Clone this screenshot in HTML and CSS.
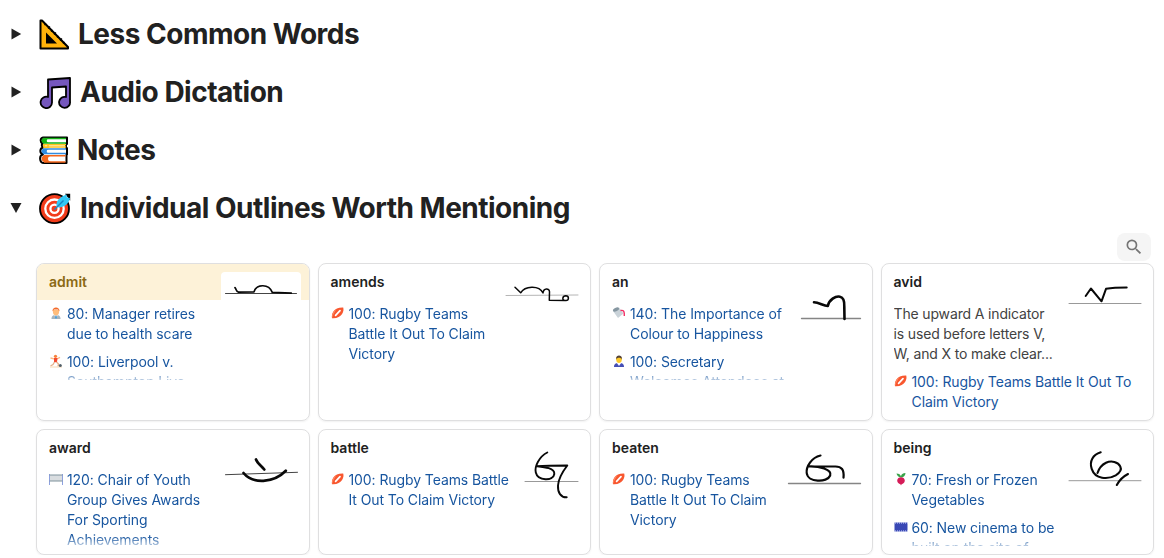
FILE: index.html
```html
<!DOCTYPE html>
<html lang="en">
<head>
<meta charset="utf-8">
<title>Outlines</title>
<link rel="stylesheet" href="styles.css">
</head>
<body>
<svg class="defs" aria-hidden="true">
  <symbol id="rugby" viewBox="0 0 14 14"><path d="M1 12.2C.2 8 2.500 1.200 12.200 1.500 13.500 5.500 10.500 13 1 12.200Z" fill="#f8572f"/><path d="M1 12.200C.5 9 2 5 5.500 3 3.500 6 2 9 1 12.200Z" fill="#ff8a65"/><path d="M4.600 9.300 9 4.700" stroke="#fff" stroke-width="1.700" stroke-linecap="round"/></symbol>
</svg>
<main class="page">
  <h2 class="toggle">
    <svg class="arrow" viewBox="0 0 12 12"><path d="M1.500.5v11L11.200 6z"/></svg>
    <svg class="emoji" viewBox="0 0 32 32"><path d="M1.500 1.500V29.500h27.500v-1.500L3 1.500z" fill="#ffb20a" stroke="#000" stroke-width="2" stroke-linejoin="round"/><path d="M7 13.500v11h11z" fill="#000"/><path d="m5.500 6 1.500-1.500M9 9.500l2-2M12 12.500l1.500-1.500M15 15.500l2-2M18 18.500l1.500-1.500M21 21.500l2-2M24 24.500l1.500-1.500" stroke="#000" stroke-width="1.100"/></svg>
    <span class="label">Less Common Words</span>
  </h2>
  <h2 class="toggle audio">
    <svg class="arrow" viewBox="0 0 12 12"><path d="M1.500.5v11L11.200 6z"/></svg>
    <svg class="emoji" viewBox="0 0 32 32"><path d="M9 2.500 31 1v23.500a5.500 5.500 0 1 1-4-4.500V9.500l-14 1V25.500a5.700 5.700 0 1 1-4-5.500z" fill="#7557bd" stroke="#000" stroke-width="1.800" stroke-linejoin="round"/></svg>
    <span class="label">Audio Dictation</span>
  </h2>
  <h2 class="toggle notes">
    <svg class="arrow" viewBox="0 0 12 12"><path d="M1.500.5v11L11.200 6z"/></svg>
    <svg class="emoji" viewBox="0 0 32 32"><path d="M4 2.500h24v6.500h-1v4h1v6.500h-.5v8.500H5C0 28 0 20 4 19.500 0 18 1 13 4 12.500 2 11 3 9 3.500 8.500 1 7 1 3 4 2.500Z" fill="#fff" stroke="#000" stroke-width="2" stroke-linejoin="round"/><path d="M4 3.500h6c-3 0-3 4.500 0 4.500H4C2 7 2 4 4 3.500Z" fill="#13b315"/><path d="M4 3.500h23M4 8h23" stroke="#13b315" stroke-width="1.300"/><path d="M4 9.800h23M5 12h22M5 9.800v2.500h4V9.800" fill="none" stroke="#ffc21c" stroke-width="1.500"/><path d="M4 14h6c-3 0-3 4.500 0 4.500H4C2 17.500 2 14.500 4 14Z" fill="#318ce0"/><path d="M4 14h23M4 18.500h23" stroke="#318ce0" stroke-width="1.400"/><path d="M4.500 20.800H12c-4 .5-4 5.700 0 6.200H5c-3-.5-3-5.500-.5-6.200Z" fill="#f5671c"/><path d="M4.500 20.800h22M5 27h21.500" stroke="#f5671c" stroke-width="1.500"/></svg>
    <span class="label">Notes</span>
  </h2>
  <h2 class="toggle target">
    <svg class="arrow" viewBox="0 0 12 12"><path d="M.5 1h11L6 11z"/></svg>
    <svg class="emoji" viewBox="0 0 32 32"><circle cx="15.500" cy="15.700" r="14.500" fill="#f23c1b" stroke="#000" stroke-width="1.800"/><circle cx="15.500" cy="15.700" r="9.200" fill="none" stroke="#fff" stroke-width="2.300"/><circle cx="15.500" cy="15.700" r="4.100" fill="#f23c1b" stroke="#fff" stroke-width="2.300"/><path d="M26 .8h5.200v7" fill="#000"/><path d="M17.500 13c-.5-6 3.500-9 10-11.500l.3 3 3.200.5c-1.500 6-5.500 9.500-11.500 9.500z" fill="#32c8f5"/><path d="m15.500 16.500 9-9" stroke="#1687c5" stroke-width="1.500"/></svg>
    <span class="label">Individual Outlines Worth Mentioning</span>
  </h2>

  <div class="toolbar">
    <button class="search" aria-label="Search"><svg viewBox="0 0 24 24"><path d="M15.500 14h-.79l-.28-.27A6.470 6.470 0 0 0 16 9.500 6.500 6.500 0 1 0 9.500 16c1.610 0 3.090-.59 4.230-1.570l.27.28v.79l5 4.990L20.490 19l-4.990-5zm-6 0C7.010 14 5 11.990 5 9.500S7.010 5 9.500 5 14 7.010 14 9.500 11.990 14 9.500 14z"/></svg></button>
  </div>

  <section class="cards">
    <article class="card highlight">
      <h3>admit</h3>
      <svg class="sketch" viewBox="218.500 264 90 76"><path class="paper" d="M220.500 340v-64a4 4 0 0 1 4-4h72a4 4 0 0 1 4 4v64z"/><path class="rule dark" d="M225 293.500h71"/><path d="M234.500 287.700c1.500 1.500 1 4 3.500 4.500l15.500-.3c2-7.500 14.500-9 18.300.5l19 .8" stroke-width="1.700"/></svg>
      <ul class="body">
        <li><svg class="icon" viewBox="0 0 14 14"><path d="M2.500 13c0-3.500 2-4 4.500-4s4.500.5 4.500 4z" fill="#a6b5bf"/><path d="M5 8.500h4L7 13z" fill="#e8eef2"/><path d="M6.400 9.500h1.200l.4 2.500-1 1-1-1z" fill="#4a9bd5"/><path d="M4 4h6v2.500c0 4-6 4-6 0z" fill="#ffbd7c"/><path d="M3.500 5.500C3 0 11 0 10.500 5.500L9 3.500H5z" fill="#f36b2a"/></svg><a>80: Manager retires<br>due to health scare</a></li>
        <li><svg class="icon" viewBox="0 0 14 14"><circle cx="6.500" cy="2.300" r="1.600" fill="#f6813b"/><path d="m1.500 4 3.500.8h3l3-1.500" fill="none" stroke="#ffb781" stroke-width="1.300"/><path d="M5 4h3.500L8 8.300H5z" fill="#f44a31"/><path d="M5.500 8 4 10.500 1.500 12M7.500 8l2 2-.5 2.500" fill="none" stroke="#e6b08b" stroke-width="1.300"/><path d="M1 13h12" stroke="#f7d9b5"/><circle cx="11.300" cy="11.500" r="1.500" fill="#526069"/></svg><a>100: Liverpool v.<br>Southampton Live</a></li>
      </ul>
    </article>
    <article class="card">
      <h3>amends</h3>
      <svg class="sketch" viewBox="500 264 90 76"><path class="rule pale" d="M506 295.500l72-.5"/><path d="m515 287.300 5.700 5.500c4-7 18.300-8 22.300.2.500-5.500 6.500-5 6.500-1.200l-.2 8.500 16.700.2c3 0 3.500-4.500-.2-4.700-3.500 0-4 4.400-1 4.700" stroke-width="1.500"/></svg>
      <ul class="body">
        <li><svg class="icon"><use href="#rugby"/></svg><a>100: Rugby Teams<br>Battle It Out To Claim<br>Victory</a></li>
      </ul>
    </article>
    <article class="card">
      <h3>an</h3>
      <svg class="sketch" viewBox="781.500 264 90 76"><path class="rule thick" d="M801 318.500h59"/><path d="M813.500 302.300c5 .2 9 3.200 13.800 3.700 1-6 8-10.500 12.200-9.300 4.500 1 4.500 6 4.300 10l.2 12.300" stroke-width="2.600"/></svg>
      <ul class="body">
        <li><svg class="icon" viewBox="0 0 14 14"><path d="m1 5 6-3.500 4.500 6L6 12z" fill="#cad3d9"/><ellipse cx="4" cy="3.500" rx="3.300" ry="1.800" fill="#8697a1" transform="rotate(-28 4 3.500)"/><path d="M8.500 4.500c3.500-.5 4 1 3.800 5.500" fill="none" stroke="#f32c62" stroke-width="1.400"/></svg><a>140: The Importance of<br>Colour to Happiness</a></li>
        <li><svg class="icon" viewBox="0 0 14 14"><path d="M2 13c0-3.500 2-4 5-4s5 .5 5 4z" fill="#454fb5"/><path d="M4.500 8.500h5L7 12z" fill="#fff"/><path d="M4 5.500V4.500c0-4 6-4 6 0v1z" fill="#554235"/><path d="M4.300 4.500c1.500 0 2-1 2.700-1s1.200 1 2.700 1v1.800c0 3.500-5.400 3.500-5.400 0z" fill="#ffca28"/></svg><a>100: Secretary<br>Welcomes Attendees at</a></li>
      </ul>
    </article>
    <article class="card">
      <h3>avid</h3>
      <svg class="sketch" viewBox="1063 264 90 76"><path class="rule" d="M1069 303.500h72"/><path d="m1085.700 296 5.200-7.500 10.600 12.800 4.500-12.500c6-1 14-1.300 20.700-1.300" stroke-width="2"/></svg>
      <div class="body full">
        <p>The upward A indicator<br>is used before letters V,<br>W, and X to make clear...</p>
        <ul>
          <li><svg class="icon"><use href="#rugby"/></svg><a>100: Rugby Teams Battle It Out To<br>Claim Victory</a></li>
        </ul>
      </div>
    </article>
    <article class="card">
      <h3>award</h3>
      <svg class="sketch" viewBox="218.500 430 90 76"><path class="rule dark" d="m225 474.700 72-2.400"/><path d="M255.500 459.500c1.500 4 5.500 6.500 8.300 10M243 473c9 11 30 10.500 42.300-2.200" stroke-width="2.700"/></svg>
      <ul class="body">
        <li><svg class="icon" viewBox="0 0 14 14"><path d="M1 3h12v6H1z" fill="#d9dde0"/><path d="M.5 2v11M13.500 2v11" stroke="#8da1df"/><path d="M.5 3h13M.5 9h13" stroke="#7f929c"/></svg><a>120: Chair of Youth<br>Group Gives Awards<br>For Sporting<br>Achievements</a></li>
      </ul>
    </article>
    <article class="card">
      <h3>battle</h3>
      <svg class="sketch" viewBox="500 430 90 76"><path class="rule" d="M525 481.500h53"/><path d="M547.300 452.500c-8 4-13 14-11.500 20 2 8.500 17.500 9 18.500 1.500.5-6-10-7-17.500-7.800 10-.7 21-.7 30.500-.7-5 6.500-8.800 13-9.300 20-.4 7 2.700 12 8.700 11.800" stroke-width="1.900"/></svg>
      <ul class="body">
        <li><svg class="icon"><use href="#rugby"/></svg><a>100: Rugby Teams Battle<br>It Out To Claim Victory</a></li>
      </ul>
    </article>
    <article class="card">
      <h3>beaten</h3>
      <svg class="sketch" viewBox="781.500 430 90 76"><path class="rule thick" d="M788 483.500h72"/><path d="M820 455.500c-9 2-14.500 11-13.800 17.500 1 9.500 20.500 10 23.500 2.500 2-6-11-9.500-21.700-9h27c6 0 8.800 3 8 11.200" stroke-width="2.200"/></svg>
      <ul class="body">
        <li><svg class="icon"><use href="#rugby"/></svg><a>100: Rugby Teams<br>Battle It Out To Claim<br>Victory</a></li>
      </ul>
    </article>
    <article class="card">
      <h3>being</h3>
      <svg class="sketch" viewBox="1063 430 90 76"><path class="rule" d="M1069 480.700h72"/><path d="M1100.700 452.300c-8 2.500-11.500 9-9 16.500 3.500 10.500 16 11 24 6.500 5-3 6-6 4.500-9-2-4.500-9-6-14.200-3.500-4.500 2.200-7 5.700-8.500 10.200M1128 474c-5 2.500-8.500 6-11.200 11" stroke-width="2.100"/></svg>
      <ul class="body">
        <li><svg class="icon" viewBox="0 0 14 14"><path d="M7 5.500C4 5 3 3 2.500 1.500 5 1.500 6.500 2.500 7 4.500c0-2 2-3.500 4.500-3.500C11.500 3.500 9.500 5.500 7 5.500z" fill="#39a34a"/><path d="M3.200 8.500c0-4.500 7.600-4.500 7.600 0 0 2.200-1.700 3.200-3.200 3.800L7 13.500l-.6-1.200C4.900 11.700 3.200 10.700 3.200 8.500z" fill="#d51c58"/></svg><a>70: Fresh or Frozen<br>Vegetables</a></li>
        <li><svg class="icon" viewBox="0 0 14 14"><path d="M.5 2.500h13v9H.5z" fill="#3948b5"/><path d="M1 3h13M1 11h13" stroke="#d5dbff" stroke-width="1" stroke-dasharray="1 1"/></svg><a>60: New cinema to be<br>built on the site of</a></li>
      </ul>
    </article>
  </section>
</main>
</body>
</html>
```
FILE: styles.css
```css
* { box-sizing: border-box; }
body {
  margin: 0;
  background: #fff;
  color: #212121;
  font-family: Inter, "Liberation Sans", sans-serif;
  font-size: 14px;
  line-height: 20px;
  overflow: hidden;
}
h2, h3, p, ul { margin: 0; padding: 0; }
ul { list-style: none; }
.defs { display: none; }
.page { padding: 5px 10px 0; }
.toggle {
  display: flex;
  align-items: center;
  height: 58px;
  font-size: 28px;
  font-weight: 650;
  letter-spacing: -0.5px;
}
.arrow { width: 12px; height: 12px; fill: #212121; margin-right: 17px; }
.emoji { width: 32px; height: 32px; margin: 2px 7px 0 0; }
.audio .emoji { margin-right: 9px; }
.notes .emoji { margin-right: 6px; }
.target .emoji { margin-right: 9px; }
.label { white-space: nowrap; }
.toolbar { display: flex; justify-content: flex-end; height: 26px; margin-top: -4px; padding-right: 3px; }
.search {
  display: flex;
  align-items: center;
  justify-content: center;
  width: 34px;
  height: 28px;
  padding: 0;
  border: 0;
  border-radius: 8px;
  background: #f5f5f5;
}
.search svg { width: 20px; height: 20px; fill: #757575; }
.cards {
  display: grid;
  grid-template-columns: repeat(4, 273.5px);
  grid-template-rows: 158px 126px;
  gap: 8px;
  margin: 4px 0 0 26px;
}
.card {
  display: grid;
  grid-template-columns: 1fr 90px;
  grid-template-rows: 36px 40px 1fr;
  border: 1px solid #dfdfe0;
  border-radius: 8px;
  box-shadow: 0 1px 2px rgba(0, 0, 0, .06);
  overflow: hidden;
}
.card h3 {
  grid-area: 1 / 1 / 2 / 3;
  padding: 8px 12px;
  font-size: 14px;
  font-weight: 600;
}
.highlight h3 { background: #fdf2d8; color: #8b6914; }
.sketch {
  grid-area: 1 / 2 / 3 / 3;
  width: 90px;
  height: 76px;
  fill: none;
  stroke: #080808;
  stroke-linecap: round;
  stroke-linejoin: round;
}
.sketch .paper { fill: #fff; stroke: none; }
.sketch .rule { stroke: #999; stroke-width: 1; }
.sketch .pale { stroke: #b5b5b5; }
.sketch .dark { stroke: #444; }
.sketch .thick { stroke: #858585; stroke-width: 1.300; }
.body {
  grid-area: 2 / 1 / 4 / 3;
  height: 76px;
  margin: 4px 12px 0;
  overflow: hidden;
  white-space: nowrap;
  letter-spacing: -0.09px;
  mask-image: linear-gradient(#000 66px, rgba(0, 0, 0, .3));
}
.full { height: auto; mask-image: none; }
.body p { color: #424242; margin-bottom: 8px; letter-spacing: -0.15px; }
.body li { display: flex; margin-bottom: 8px; }
.icon { flex: none; width: 14px; height: 14px; margin: 2px 4px 0 0; }
.body a { color: #17559f; }
```
